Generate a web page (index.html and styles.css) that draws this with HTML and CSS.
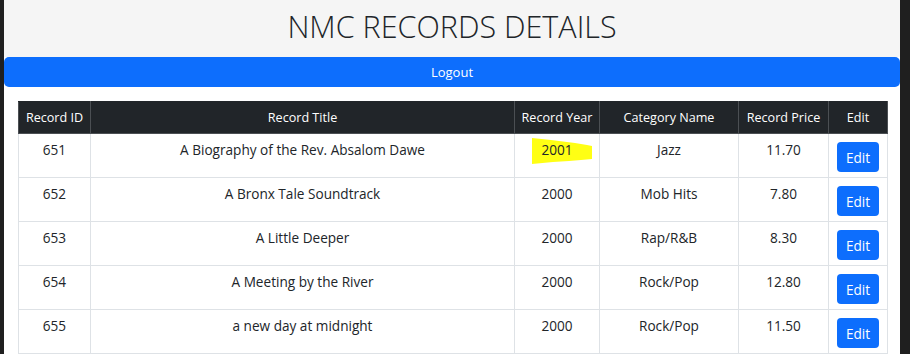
FILE: index.html
```html
<!DOCTYPE html>
<html>
<head>
  <title>NMC Records Details</title>
  <link rel="stylesheet" href="styles.css">
</head>
<body>
  <div class="page">
    <div class="page-head">
      <h1>NMC RECORDS DETAILS</h1>
    </div>
    <button class="btn btn-logout">Logout</button>

    <div class="table-wrap">
      <table class="records">
        <thead>
          <tr>
            <th class="col-id">Record ID</th>
            <th class="col-title">Record Title</th>
            <th class="col-year">Record Year</th>
            <th class="col-cat">Category Name</th>
            <th class="col-price">Record Price</th>
            <th class="col-edit">Edit</th>
          </tr>
        </thead>
        <tbody>
          <tr>
            <td>651</td>
            <td>A Biography of the Rev. Absalom Dawe</td>
            <td class="marked">
              <svg class="marker" width="62" height="28" viewBox="0 0 62 28">
                <polygon points="1,1 20,3 44,6 56,8 61,9 61,22 50,23 38,24 22,25 1,27" fill="#ffff14"/>
              </svg>
              <span class="marked-text">2001</span>
            </td>
            <td>Jazz</td>
            <td>11.70</td>
            <td><button class="btn btn-edit">Edit</button></td>
          </tr>
          <tr>
            <td>652</td>
            <td>A Bronx Tale Soundtrack</td>
            <td>2000</td>
            <td>Mob Hits</td>
            <td>7.80</td>
            <td><button class="btn btn-edit">Edit</button></td>
          </tr>
          <tr>
            <td>653</td>
            <td>A Little Deeper</td>
            <td>2000</td>
            <td>Rap/R&amp;B</td>
            <td>8.30</td>
            <td><button class="btn btn-edit">Edit</button></td>
          </tr>
          <tr>
            <td>654</td>
            <td>A Meeting by the River</td>
            <td>2000</td>
            <td>Rock/Pop</td>
            <td>12.80</td>
            <td><button class="btn btn-edit">Edit</button></td>
          </tr>
          <tr>
            <td>655</td>
            <td>a new day at midnight</td>
            <td>2000</td>
            <td>Rock/Pop</td>
            <td>11.50</td>
            <td><button class="btn btn-edit">Edit</button></td>
          </tr>
        </tbody>
      </table>
    </div>
  </div>
</body>
</html>
```

FILE: styles.css
```css
html, body { margin: 0; padding: 0; }
body {
  background-color: #1f1f1f;
  font-family: 'Open Sans', 'Noto Sans', sans-serif;
  color: #212529;
  height: 354px;
  overflow: hidden;
}
.page {
  margin-left: 4px;
  width: 896px;
  height: 354px;
  background-color: #fff;
  overflow: hidden;
}
.page-head {
  height: 57px;
  background-color: #f5f5f5;
  text-align: center;
}
.page-head h1 {
  margin: 0;
  padding-top: 5px;
  font-size: 30.5px;
  line-height: 42px;
  font-weight: 300;
  color: #212529;
}
.btn {
  font-family: inherit;
  border: none;
  color: #fff;
  background-color: #0d6efd;
  cursor: pointer;
}
.btn-logout {
  display: block;
  width: 100%;
  height: 30px;
  border-radius: 5px;
  font-size: 13px;
}
.table-wrap {
  padding: 14px 13px 0 14px;
}
.records {
  width: 869px;
  table-layout: fixed;
  border-collapse: collapse;
  font-size: 13.6px;
  text-align: center;
}
.records th,
.records td {
  box-sizing: border-box;
}
.records th {
  background-color: #212529;
  color: #fff;
  font-weight: 400;
  font-size: 12.6px;
  height: 32px;
  padding: 0 2px;
  border: 1px solid #4b4f53;
  border-top-color: #212529;
}
.records td {
  height: 44px;
  padding: 5px 2px 0;
  vertical-align: top;
  line-height: 21px;
  border: 1px solid #dee2e6;
}
.col-id { width: 72px; }
.col-title { width: 424px; }
.col-year { width: 85px; }
.col-cat { width: 139px; }
.col-price { width: 90px; }
.col-edit { width: 59px; }
.marked { position: relative; }
.marker {
  position: absolute;
  left: 16px;
  top: 3px;
}
.marked-text { position: relative; }
.btn-edit {
  width: 42px;
  height: 30px;
  margin-top: 3px;
  border-radius: 4px;
  font-size: 13.6px;
  padding: 0;
}
```
